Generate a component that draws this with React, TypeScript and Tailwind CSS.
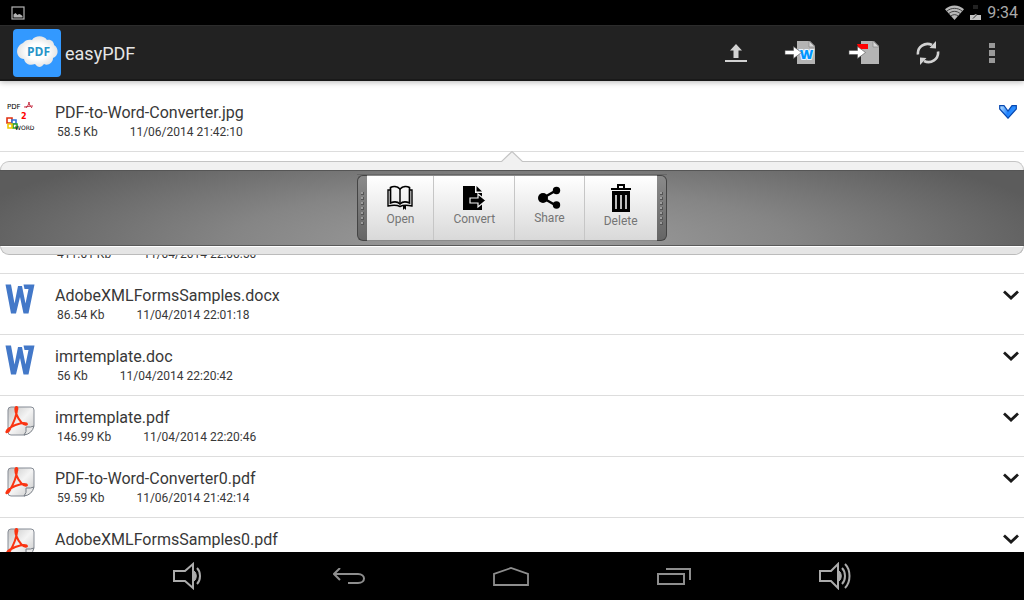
import type { ReactNode } from "react";

type FileKind = "image" | "word" | "pdf";

interface FileEntry {
    id: number;
    name?: string;
    kind?: FileKind;
    size?: string;
    date?: string;
    expanded?: boolean;
}

const files: FileEntry[] = [
    { id: 1, name: "PDF-to-Word-Converter.jpg", kind: "image", size: "58.5 Kb", date: "11/06/2014 21:42:10", expanded: true },
    { id: 2 },
    { id: 3, size: "411.01 Kb", date: "11/04/2014 22:00:50" },
    { id: 4, name: "AdobeXMLFormsSamples.docx", kind: "word", size: "86.54 Kb", date: "11/04/2014 22:01:18" },
    { id: 5, name: "imrtemplate.doc", kind: "word", size: "56 Kb", date: "11/04/2014 22:20:42" },
    { id: 6, name: "imrtemplate.pdf", kind: "pdf", size: "146.99 Kb", date: "11/04/2014 22:20:46" },
    { id: 7, name: "PDF-to-Word-Converter0.pdf", kind: "pdf", size: "59.59 Kb", date: "11/06/2014 21:42:14" },
    { id: 8, name: "AdobeXMLFormsSamples0.pdf", kind: "pdf" },
];

function StatusBar() {
    return (
        <div className="flex h-[25px] shrink-0 items-center justify-between bg-black pl-[11px] pr-1.5">
            <svg width="14" height="14" viewBox="0 0 14 14" aria-hidden="true">
                <rect x="1" y="1" width="12" height="12" fill="none" stroke="#b4b4b4" strokeWidth="1.2" />
                <path d="M2.5 11.5V8.5L4.5 7l2 2 1.5-1 1.5.5 2 1.5v1.5z" fill="#b4b4b4" />
            </svg>
            <div className="flex items-center gap-1.5">
                <svg width="19" height="15" viewBox="0 0 19 15" aria-hidden="true">
                    <path d="M0 4.3C5-.9 14-.9 19 4.3L9.5 15z" fill="#b8b8b8" />
                    <path d="M1.8 6.2C6 2.4 13 2.4 17.2 6.2M3.8 8.6c3.3-3 8.1-3 11.4 0M5.9 11c2.2-1.8 5-1.8 7.2 0" fill="none" stroke="#222" strokeWidth="0.8" />
                </svg>
                <svg width="11" height="15" viewBox="0 0 11 15" aria-hidden="true">
                    <path d="M3 0h5v4H3z" fill="#222" />
                    <path d="M0 10h4l2-1 1 1h4v5H0z" fill="#c4c4c4" />
                    <path d="M3 13.5l4-4" stroke="#333" strokeWidth="1" />
                </svg>
                <span className="text-base leading-6 text-[#aaaaaa]">9:34</span>
            </div>
        </div>
    );
}

function AppLogo() {
    return (
        <svg width="48" height="48" viewBox="0 0 48 48" aria-hidden="true">
            <defs>
                <radialGradient id="cloud">
                    <stop offset="0.5" stopColor="#ffffff" />
                    <stop offset="1" stopColor="#e4e4e4" />
                </radialGradient>
            </defs>
            <rect width="48" height="48" rx="4" fill="#3399ff" />
            <path
                d="M10 14c2-3 6-4 9-3 3-5 12-5 15 0 4-1 7 2 7 5 5 3 5 11-1 13 0 5-5 8-9 6-3 4-6 4-9 0-5 2-10 0-11-5-9-1-9-13-1-16z"
                fill="url(#cloud)"
            />
            <text x="25.500" y="27" textAnchor="middle" fontFamily="Open Sans, sans-serif" fontSize="12" fontWeight="700" fill="#2894c8">PDF</text>
        </svg>
    );
}

function UploadIcon() {
    return (
        <svg width="24" height="20" viewBox="0 0 24 20" aria-hidden="true">
            <path d="M12 1L6 7.500h3.500V15h5V7.500H18z" fill="#d2d2d2" />
            <path d="M1 17h22v2H1z" fill="#d2d2d2" />
        </svg>
    );
}

function ToDocIcon({ target }: { target: "word" | "pdf" }) {
    return (
        <svg width="32" height="26" viewBox="0 0 32 26" aria-hidden="true">
            <path d="M13 1h13l5 5v18H13z" fill="#b4b4b4" />
            <path d="M25 1v6h6z" fill="#d8d8d8" stroke="#888" strokeWidth="0.7" />
            {target === "word" ? (
                <text x="22.500" y="19" textAnchor="middle" fontFamily="Open Sans, sans-serif" fontSize="13" fontWeight="800" fill="#0096ff" stroke="#e8f4ff" strokeWidth="2" paintOrder="stroke">W</text>
            ) : (
                <path d="M9 4h11v5H11z" fill="#ff0000" />
            )}
            <path d="M1 10.500h8.500V6.500L17.500 12.500l-8 6v-4H1z" fill="#ffffff" stroke="#555" strokeWidth="0.6" />
        </svg>
    );
}

function RefreshIcon() {
    return (
        <svg width="24" height="26" viewBox="0 0 24 26" fill="none" aria-hidden="true">
            <path d="M2 14.500C1 7 9 1.500 16 5" stroke="#d2d2d2" strokeWidth="2.600" />
            <path d="M22 11.500C23 19 15 24.500 8 21" stroke="#d2d2d2" strokeWidth="2.600" />
            <path d="M13.500 8L20 1v7.500z" fill="#d2d2d2" />
            <path d="M10.500 18L4 25v-7.500z" fill="#d2d2d2" />
        </svg>
    );
}

function OverflowIcon() {
    return (
        <svg width="6" height="20" viewBox="0 0 6 20" fill="#999" aria-hidden="true">
            <path d="M0 0h6v5H0zM0 7h6v6H0zM0 15h6v5H0z" />
        </svg>
    );
}

function BarButton({ label, children }: { label: string; children: ReactNode }) {
    return (
        <button type="button" aria-label={label} className="flex w-16 items-center justify-center">
            {children}
        </button>
    );
}

function ActionBar() {
    return (
        <header className="relative z-20 flex h-14 shrink-0 items-stretch justify-between border-t border-b-2 border-t-[#2c2c2c] border-b-[#191919] bg-[#222222] pl-[13px] shadow-[0_1px_6px_rgba(0,0,0,0.3)]">
            <div className="flex items-center gap-1">
                <AppLogo />
                <h1 className="pt-0.5 text-lg text-[#e6e6e6]">easyPDF</h1>
            </div>
            <div className="flex">
                <BarButton label="Upload"><UploadIcon /></BarButton>
                <BarButton label="Convert to Word"><ToDocIcon target="word" /></BarButton>
                <BarButton label="Convert to PDF"><ToDocIcon target="pdf" /></BarButton>
                <BarButton label="Refresh"><RefreshIcon /></BarButton>
                <BarButton label="More options"><OverflowIcon /></BarButton>
            </div>
        </header>
    );
}

function FileIcon({ kind }: { kind: FileKind }) {
    if (kind === "word") {
        return (
            <svg width="30" height="30" viewBox="0 0 30 30" aria-hidden="true">
                <path
                    d="M.5.500h5.500l3.500 19L13 2h4l3.500 17.500L23.500 5H19.500L18.500.500H29.500L23.500 29.500h-5L15 13l-4 16.500H6z"
                    fill="#4378c8"
                />
            </svg>
        );
    }
    if (kind === "pdf") {
        return (
            <svg width="30" height="30" viewBox="0 0 30 30" fill="none" aria-hidden="true">
                <defs>
                    <linearGradient id="page" x1="0" y1="0" x2="1" y2="1">
                        <stop offset="0" stopColor="#c4c4c4" />
                        <stop offset="0.5" stopColor="#f4f4f4" />
                        <stop offset="1" stopColor="#c8c8c8" />
                    </linearGradient>
                </defs>
                <path d="M6 1h20q3 0 3 3v16l-9 9H6q-3 0-3-3V4q0-3 3-3z" fill="url(#page)" stroke="#858b95" />
                <path d="M29 20q-3 1.500-8 1 1 5-2 8 8-1 10-9z" fill="#e8e8e8" stroke="#777d85" />
                <path
                    d="M1.500 25.500C3 21 17 15.500 21.500 17.500c1.500 1.500-2 2-5-1C12 12 10 5 10.500 2c.5-2 2.500-1 1.500 2C11.500 9 8.500 17 5 23c-1.500 3-4 4-3.500 2.500z"
                    stroke="#fa3412"
                    strokeWidth="2.100"
                    strokeLinejoin="round"
                />
            </svg>
        );
    }
    return (
        <svg width="30" height="30" viewBox="0 0 30 30" aria-hidden="true">
            <text x="2" y="8" fontFamily="DejaVu Sans, sans-serif" fontSize="7" fill="#000">PDF</text>
            <path d="M19 6c3 0 5-1 9-1M24 1c0 3-2 4-3 6M24 1c0 2 1 4 3 6" fill="none" stroke="#c01830" strokeWidth="0.9" />
            <text x="16" y="18" fontFamily="DejaVu Sans, sans-serif" fontSize="8" fontWeight="700" fill="#f00">2</text>
            <g fill="#fff" strokeWidth="1.600">
                <path d="M2 17h5v5H2z" stroke="#e03010" />
                <path d="M7 19h4v4H7z" stroke="#3070d8" />
                <path d="M8 23h4v4H8z" stroke="#28a028" />
                <path d="M3 23h4v4H3z" stroke="#f0c800" />
            </g>
            <text x="10" y="29" fontFamily="DejaVu Sans, sans-serif" fontSize="6" fill="#000">WORD</text>
        </svg>
    );
}

function ExpandIcon({ expanded }: { expanded?: boolean }) {
    if (expanded) {
        return (
            <svg width="20" height="14" viewBox="0 0 20 14" aria-hidden="true">
                <defs>
                    <linearGradient id="tick" x1="0" y1="0" x2="1" y2="0.300">
                        <stop offset="0.150" stopColor="#9fd0ff" />
                        <stop offset="0.600" stopColor="#1c80ff" />
                        <stop offset="1" stopColor="#3898ff" />
                    </linearGradient>
                </defs>
                <path d="M.7.700h4.300L9 6l4-5.300h4.300V4L9 13.200.7 4z" fill="url(#tick)" stroke="#0848b0" strokeWidth="1.200" />
            </svg>
        );
    }
    return (
        <svg width="16" height="10" viewBox="0 0 16 10" fill="none" aria-hidden="true">
            <path d="M1 1.500L8 8l7-6.500" stroke="#1a1a1a" strokeWidth="2.800" />
        </svg>
    );
}

function OpenIcon() {
    return (
        <svg width="26" height="26" viewBox="0 0 26 26" fill="none" stroke="#000" aria-hidden="true">
            <path d="M13 5C10 2 6 2 3.500 3.500V19C7 17.500 11 18 13 20c2-2 6-2.500 9.500-1V3.500C20 2 16 2 13 5z" strokeWidth="1.700" />
            <path d="M13 5v14" strokeWidth="1.500" />
            <path d="M3 6H1v16c5-1 9-1 12 .5 3-1.500 7-1.500 12-.5V6h-2" strokeWidth="1.400" />
            <path d="M16 21h3v5l-1.500-1.500L16 26z" fill="#000" stroke="none" />
        </svg>
    );
}

function ConvertIcon() {
    return (
        <svg width="24" height="26" viewBox="0 0 24 26" aria-hidden="true">
            <path d="M1 2h12v7h7v17H1z" fill="#000" />
            <path d="M14.500 2v5.500H20z" fill="#000" />
            <path d="M8 14h8v-4l8 6.500-8 6.500v-4H8z" fill="#000" stroke="#f4f4f4" strokeWidth="1.200" />
        </svg>
    );
}

function ShareIcon() {
    return (
        <svg width="24" height="25" viewBox="0 0 24 25" aria-hidden="true">
            <path d="M19 6.500L6 14l13 7.500" fill="none" stroke="#000" strokeWidth="2.500" />
            <circle cx="6" cy="14" r="5" />
            <circle cx="19.500" cy="6.500" r="3.700" />
            <circle cx="19.500" cy="21" r="3.700" />
        </svg>
    );
}

function DeleteIcon() {
    return (
        <svg width="20" height="28" viewBox="0 0 20 28" aria-hidden="true">
            <path d="M7 4V1h6v3" fill="none" stroke="#000" strokeWidth="2" />
            <path d="M0 4h20v2H0zM1 7h18v21H1z" />
            <path d="M5 11v14M10 11v14M15 11v14" stroke="#bcbcbc" strokeWidth="2" />
        </svg>
    );
}

function Grip({ side }: { side: "left" | "right" }) {
    return (
        <div
            className={`flex w-2.5 flex-col items-center justify-center gap-0.5 border-y border-[#444] bg-linear-to-b from-[#8a8a8a] to-[#666] ${
                side === "left" ? "rounded-l-md border-l" : "rounded-r-md border-r"
            }`}
        >
            {[1, 2, 3, 4, 5, 6, 7].map((n) => (
                <span key={n} className="size-[3px] border-r border-b border-[#555] bg-[#9c9c9c]" />
            ))}
        </div>
    );
}

const actions = [
    { label: "Open", icon: <OpenIcon /> },
    { label: "Convert", icon: <ConvertIcon /> },
    { label: "Share", icon: <ShareIcon /> },
    { label: "Delete", icon: <DeleteIcon /> },
];

function QuickActions() {
    return (
        <div className="absolute inset-x-0 top-full z-10">
            {/* Pointer towards the selected row */}
            <svg className="relative mx-auto -mb-px block" width="22" height="11" viewBox="0 0 22 11" aria-hidden="true">
                <path d="M0 11L11 0l11 11z" fill="#f1f1f1" />
                <path d="M0 11L11 .5 22 11" fill="none" stroke="#c4c4c4" strokeWidth="1.200" />
            </svg>
            <div className="-mt-px h-[9px] rounded-t-[9px] border border-b-0 border-[#c4c4c4] bg-[#f1f1f1]" />
            <div className="flex justify-center border-y border-t-[#555] border-b-[#5a5a5a] bg-[radial-gradient(ellipse_55%_160%_at_50%_100%,#a2a2a2_0%,#858585_50%,#5c5c5c_100%)] pt-1 pb-1">
                <div className="flex shadow-[0_-1px_0_#666]">
                    <Grip side="left" />
                    <div className="flex border-y border-[#8a8a8a]">
                        {actions.map((action) => (
                            <button
                                key={action.label}
                                type="button"
                                className="flex h-16 flex-col items-center border-r border-[#c6c6c6] bg-linear-to-b from-white to-[#d9d9d9] px-[19px] pt-2 text-xs leading-[18px] text-[#757575] last:border-r-0"
                            >
                                {action.icon}
                                {action.label}
                            </button>
                        ))}
                    </div>
                    <Grip side="right" />
                </div>
            </div>
            <div className="h-[9px] rounded-b-[9px] border border-[#bbb] border-t-white bg-[#e5e5e5]" />
        </div>
    );
}

function FileRow({ file }: { file: FileEntry }) {
    return (
        <li className="relative flex h-[61px] items-start border-b border-[#dddddd] px-[5px] pt-2.5">
            <div className="size-[30px] shrink-0">{file.kind && <FileIcon kind={file.kind} />}</div>
            <div className="flex-1 pl-5">
                <p className="h-[23px] text-base leading-6 text-[#383838]">{file.name}</p>
                <p className="flex gap-8 pl-0.5 text-xs leading-4 text-[#383838]">
                    <span>{file.size}</span>
                    <span>{file.date}</span>
                </p>
            </div>
            {file.name && (
                <button type="button" aria-label={`Actions for ${file.name}`} className="flex h-[22px] items-center">
                    <ExpandIcon expanded={file.expanded} />
                </button>
            )}
            {file.expanded && <QuickActions />}
        </li>
    );
}

function NavBar() {
    return (
        <nav className="h-12 shrink-0 bg-black">
            <div className="mx-auto flex h-full max-w-[810px] items-stretch">
                <button type="button" aria-label="Volume down" className="flex flex-1 items-center justify-center">
                    <svg width="30" height="28" viewBox="0 0 30 28" fill="none" stroke="#ababab" aria-hidden="true">
                        <path d="M1 9h11l8-7v24l-8-7H1z" strokeWidth="2" />
                        <path d="M21 9c3 2 3 8 0 10z" fill="#ababab" />
                        <path d="M24 6c4 4 4 12 0 16" strokeWidth="2" />
                    </svg>
                </button>
                <button type="button" aria-label="Back" className="flex flex-1 items-center justify-center">
                    <svg width="34" height="16" viewBox="0 0 34 16" fill="none" stroke="#8e8e8e" strokeWidth="2" aria-hidden="true">
                        <path d="M7 0L1 6l6 6M1 6h24c8 0 8 9 0 9H15" />
                    </svg>
                </button>
                <button type="button" aria-label="Home" className="flex flex-1 items-center justify-center">
                    <svg width="38" height="20" viewBox="0 0 38 20" fill="none" stroke="#8e8e8e" strokeWidth="1.800" aria-hidden="true">
                        <path d="M1 19V8l17-6 17 6v11z" />
                    </svg>
                </button>
                <button type="button" aria-label="Recent apps" className="flex flex-1 items-center justify-center">
                    <svg width="34" height="18" viewBox="0 0 34 18" fill="none" stroke="#8e8e8e" strokeWidth="2" aria-hidden="true">
                        <path d="M1 7h26v10H1zM9 2h24v11" />
                    </svg>
                </button>
                <button type="button" aria-label="Volume up" className="flex flex-1 items-center justify-center">
                    <svg width="34" height="28" viewBox="0 0 34 28" fill="none" stroke="#ababab" aria-hidden="true">
                        <path d="M1 9h11l7-7v24l-7-7H1z" strokeWidth="2" />
                        <path d="M20 9c3 2 3 8 0 10z" fill="#ababab" />
                        <path d="M23 6c4 4 4 12 0 16M26 2c6 6 6 18 0 24" strokeWidth="2" />
                    </svg>
                </button>
            </div>
        </nav>
    );
}

export default function App() {
    return (
        <div className="flex h-screen flex-col overflow-hidden bg-white font-[Roboto,sans-serif]">
            <StatusBar />
            <ActionBar />
            <main className="min-h-0 flex-1 overflow-hidden pt-2.5">
                <ul>
                    {files.map((file) => (
                        <FileRow key={file.id} file={file} />
                    ))}
                </ul>
            </main>
            <NavBar />
        </div>
    );
}
